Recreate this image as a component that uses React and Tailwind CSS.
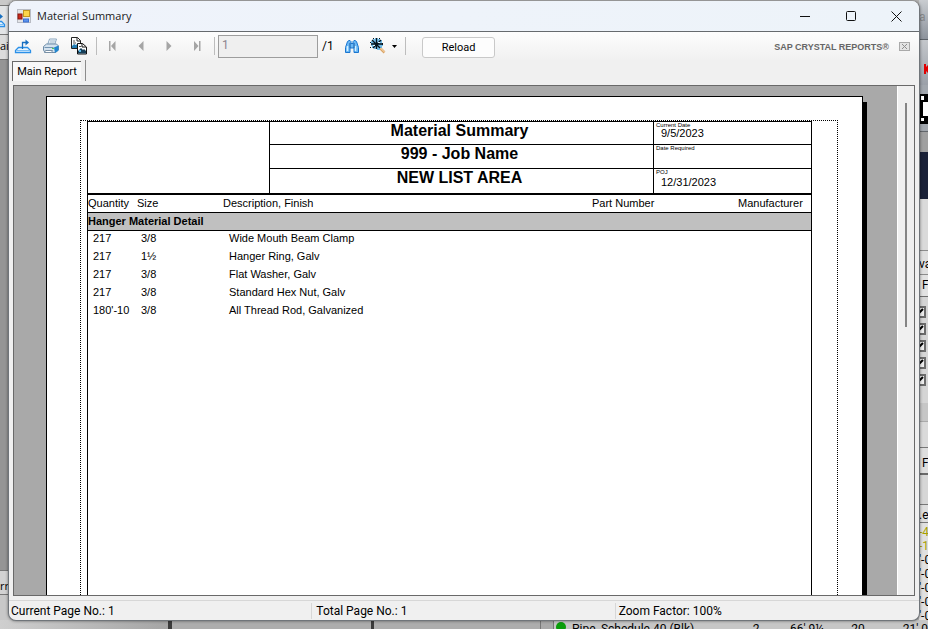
import React from "react";

const ui = "font-['Open_Sans','Noto_Sans',sans-serif]";
const compact = "font-['Roboto','Open_Sans',sans-serif]";

const items = [
  ["217", "3/8", "Wide Mouth Beam Clamp"],
  ["217", "1½", "Hanger Ring, Galv"],
  ["217", "3/8", "Flat Washer, Galv"],
  ["217", "3/8", "Standard Hex Nut, Galv"],
  ["180'-10", "3/8", "All Thread Rod, Galvanized"],
];

function AppIcon() {
  return (
    <svg width="14" height="14" viewBox="0 0 14 14" aria-hidden="true">
      <rect x="0.5" y="0.5" width="13" height="13" fill="#e2e3e6" stroke="#b9bcc4" />
      <rect x="1" y="5" width="4" height="5" fill="#c92a1c" stroke="#8c150c" />
      <rect x="6.500" y="1.500" width="6" height="6" fill="#fcd44a" stroke="#c39620" />
      <rect x="6.500" y="10" width="5" height="3" fill="#5b93ee" stroke="#3a6fd0" />
    </svg>
  );
}

function ExportIcon() {
  return (
    <svg width="18" height="16" viewBox="0 0 18 16" fill="none" className="shrink-0" aria-hidden="true">
      <path d="M4.500 9.500h9l3 3v2H1.500v-2z" fill="#eaf6ff" stroke="#2b90e8" strokeWidth="1.300" />
      <path d="M2 12.500h14" stroke="#79bdf5" />
      <path d="M8.500 11V4.500h4" stroke="#176fc1" strokeWidth="1.300" />
      <path d="M11.500 1.500l3.500 3-3.500 3z" fill="#176fc1" />
    </svg>
  );
}

function PrintIcon() {
  return (
    <svg width="18" height="16" viewBox="0 0 18 16" aria-hidden="true">
      <path d="M5.500 7L7.500 1h7l-2 6z" fill="#f6fbff" stroke="#8aa6bf" />
      <path d="M8 3h5M7.500 5h5" stroke="#9bb4c9" />
      <path d="M1.500 8.500l3-2.500h10l2 2v4l-3 2.500H3L1.500 12z" fill="#d4e2ee" stroke="#6d8ca8" />
      <path d="M12 9.500l4.500-2v5L13 15z" fill="#2387cf" />
      <path d="M2.500 9.500h9" stroke="#7394b2" />
      <path d="M3.500 12.500h7l-1 2H2.500z" fill="#fff" stroke="#7890a6" />
      <rect x="10" y="10" width="2" height="1" fill="#48c95a" />
    </svg>
  );
}

function CopyIcon() {
  return (
    <svg width="18" height="18" viewBox="0 0 18 18" aria-hidden="true">
      <path d="M1.500 .5h6l3 3v8h-9z" fill="#fff" stroke="#222" />
      <path d="M7 .5v3.500h3.500" fill="none" stroke="#222" />
      <path d="M3 4h2M3 6h3" stroke="#555" />
      <path d="M2 11V9l2-2 2 1 2-2 2 3v2z" fill="#267fb5" />
      <path d="M7.500 6.500h5l4 3.500v7h-9z" fill="#fff" stroke="#111" />
      <path d="M12 6.500v3.500h4" fill="none" stroke="#111" />
      <path d="M9 9.500h2" stroke="#555" />
      <path d="M8 16.500V14l3-3 2 2 1-1 2 2v2.500z" fill="#163e58" />
      <path d="M9 13h2v2H9z" fill="#5bbcec" />
    </svg>
  );
}

function NavIcon({ kind }) {
  return (
    <svg width="12" height="10" viewBox="0 0 12 10" fill="#a5a5a5" aria-hidden="true">
      {kind === "first" && <path d="M2 0h1.500v10H2zM8.500 0v10L4 5z" />}
      {kind === "prev" && <path d="M8.500 0v10L3.500 5z" />}
      {kind === "next" && <path d="M3.500 0v10L8.500 5z" />}
      {kind === "last" && <path d="M3 0v10L7.500 5zM8 0h1.500v10H8z" />}
    </svg>
  );
}

function FindIcon() {
  return (
    <svg width="14" height="13" viewBox="0 0 14 13" aria-hidden="true">
      <path d="M2.500 1.500l1.500-1h1l1 1v2h2v-2l1-1h1l1.500 1 2 6v5h-4.500V8h-4v4.500H.5v-5z" fill="#69b8f7" stroke="#1b76cf" />
      <path d="M2.500 6v5M10.500 6v5" stroke="#d4f0ff" strokeWidth="1.500" />
      <path d="M5 3v5M9 3v5" stroke="#1458a2" />
    </svg>
  );
}

function ZoomIcon() {
  return (
    <svg width="16" height="16" viewBox="0 0 16 16" aria-hidden="true">
      <path d="M9.500 9.500l5 5" stroke="#d9a468" strokeWidth="2.500" />
      <path d="M10.500 10l4 4" stroke="#ffe0b4" />
      <path d="M1 3h2V1h2V0h3v1h2v1h2v3h1v3h-1v2h-2v2H7v-1H4v-1H2V8H1z" fill="#72bce7" />
      <path d="M6.500 0v11M1 6h11M2 2l8 8M11 2l-8 8" stroke="#07131c" strokeWidth="1.300" />
      <path d="M3 0h1v1H3zM9 0h1v1H9zM0 4h1v1H0zM12 5h1v2h-1zM0 9h1v1H0z" fill="#07131c" />
      <path d="M8 4h2v1H8zM3 7h2v1H3z" fill="#e2f7ff" />
    </svg>
  );
}

function ToolButton({ label, children }) {
  return (
    <button type="button" aria-label={label} className="flex w-7 shrink-0 items-center justify-center">
      {children}
    </button>
  );
}

function Separator() {
  return <span className="h-[18px] w-px shrink-0 bg-[#bdbdbd]" />;
}

function TitleBar() {
  return (
    <header className="flex h-[31px] shrink-0 items-center border-b border-[#666a6e] bg-linear-to-r from-[#eff3fb] to-[#edf3f9] pl-2">
      <AppIcon />
      <h1 className={`flex-1 pl-[6px] text-[11px] leading-4 text-[#1a1a1a] ${ui}`}>Material Summary</h1>
      <button type="button" aria-label="Minimize" className="flex h-full w-[46px] items-center justify-center">
        <svg width="11" height="11" stroke="#111"><path d="M1 5.500h10" /></svg>
      </button>
      <button type="button" aria-label="Maximize" className="flex h-full w-[46px] items-center justify-center">
        <svg width="11" height="11" fill="none" stroke="#111"><rect x="1.500" y=".5" width="9" height="9" rx="1" /></svg>
      </button>
      <button type="button" aria-label="Close" className="flex h-full w-[46px] items-center justify-center">
        <svg width="11" height="11" stroke="#111"><path d="M.5.5l10 10M10.500.5l-10 10" /></svg>
      </button>
    </header>
  );
}

function Toolbar() {
  return (
    <div className={`flex h-7 shrink-0 items-center bg-linear-to-b from-[#fdfdfd] to-[#f1f1f1] ${compact}`}>
      <ToolButton label="Export report"><ExportIcon /></ToolButton>
      <ToolButton label="Print report"><PrintIcon /></ToolButton>
      <ToolButton label="Copy"><CopyIcon /></ToolButton>
      <span className="w-[3px] shrink-0" />
      <Separator />
      <span className="w-[2px] shrink-0" />
      <ToolButton label="First page"><NavIcon kind="first" /></ToolButton>
      <ToolButton label="Previous page"><NavIcon kind="prev" /></ToolButton>
      <ToolButton label="Next page"><NavIcon kind="next" /></ToolButton>
      <ToolButton label="Last page"><NavIcon kind="last" /></ToolButton>
      <span className="w-[3px] shrink-0" />
      <Separator />
      <input
        type="text"
        aria-label="Page number"
        defaultValue="1"
        disabled
        className="ml-[3px] h-[23px] w-[100px] shrink-0 border border-[#9d9d9d] bg-[#efefef] px-[3px] pb-[2px] text-[12px] text-[#8d8590]"
      />
      <span className="w-5 shrink-0 pl-1 text-[12px] text-black">/1</span>
      <ToolButton label="Find text"><FindIcon /></ToolButton>
      <button type="button" aria-label="Zoom" className="ml-[4px] flex w-8 shrink-0 items-center gap-[6px]">
        <ZoomIcon />
        <svg width="5" height="3"><path d="M0 0h5L2.500 3z" /></svg>
      </button>
      <span className="w-[3px] shrink-0" />
      <Separator />
      <button type="button" className="mt-[3px] ml-4 h-[21px] w-[73px] shrink-0 rounded-[3px] border border-[#c9c9c9] bg-[#fdfdfd] text-[11px] leading-4 text-black">
        Reload
      </button>
      <span className="flex-1" />
      <span className="pt-[3px] font-['Liberation_Sans',Arial,sans-serif] text-[9px] font-bold text-[#666]">SAP CRYSTAL REPORTS®</span>
      <button type="button" aria-label="Close view" className="mr-[9px] ml-[10px]">
        <svg width="11" height="9" viewBox="0 0 11 9" fill="none" stroke="#a9a9a9">
          <rect x=".5" y=".5" width="10" height="8" fill="#e4e4e4" />
          <path d="M3 2l5 5M8 2L3 7" stroke="#8e8e8e" />
        </svg>
      </button>
    </div>
  );
}

function TabStrip() {
  return (
    <div className="flex h-[25px] shrink-0 items-start bg-[#f0f0f0] pl-[3px]" role="tablist">
      <button
        type="button"
        role="tab"
        aria-selected="true"
        className={`mt-px h-[20px] w-[69px] border-t border-l border-[#696969] bg-[#f8f8f8] text-[11px] leading-4 whitespace-nowrap text-black ${compact}`}
      >
        Main Report
      </button>
      <span className="ml-[4px] h-[21px] w-px bg-[#8c8c8c]" />
    </div>
  );
}

function DateCell({ label, value, pad }) {
  return (
    <dl className="pl-[2px]">
      <dt className="text-[6px] leading-[6px]">{label}</dt>
      <dd className={`pl-[5px] text-[11px] leading-[11px] ${pad}`}>{value}</dd>
    </dl>
  );
}

function ReportHeader() {
  return (
    <div className="grid grid-cols-[182px_1fr_158px] border-b-2 border-black">
      <div className="border-r border-black" />
      <div className="grid grid-rows-[23px_24px_24px] divide-y divide-black text-center text-[16px] leading-[17px] font-bold">
        <h2 className="pr-[4px]">Material Summary</h2>
        <p className="pr-[4px]">999 - Job Name</p>
        <p className="pr-[4px]">NEW LIST AREA</p>
      </div>
      <div className="grid grid-rows-[23px_24px_24px] divide-y divide-black border-l border-black">
        <DateCell label="Current Date" value="9/5/2023" pad="" />
        <DateCell label="Date Required" value="" pad="" />
        <DateCell label="POJ" value="12/31/2023" pad="pt-[2px]" />
      </div>
    </div>
  );
}

function ReportTable() {
  return (
    <table className="w-full table-fixed border-separate border-spacing-0 text-left text-[11px]">
      <colgroup>
        <col className="w-[49px]" />
        <col className="w-[86px]" />
        <col />
        <col className="w-[146px]" />
        <col className="w-[73px]" />
      </colgroup>
      <thead>
        <tr className="h-[17px] leading-[17px]">
          <th className="font-normal">Quantity</th>
          <th className="font-normal">Size</th>
          <th className="font-normal">Description, Finish</th>
          <th className="font-normal">Part Number</th>
          <th className="font-normal">Manufacturer</th>
        </tr>
      </thead>
      <tbody>
        <tr>
          <th colSpan={5} className="h-[19px] border-y border-black bg-[#c0c0c0] leading-[17px] font-bold">
            Hanger Material Detail
          </th>
        </tr>
        {items.map(([qty, size, desc]) => (
          <tr key={desc} className="h-[18px] leading-[14px]">
            <td className="pb-[4px] pl-[5px] whitespace-nowrap">{qty}</td>
            <td className="pb-[4px] pl-[4px]">{size}</td>
            <td className="pb-[4px] pl-[6px]">{desc}</td>
            <td />
            <td />
          </tr>
        ))}
      </tbody>
    </table>
  );
}

function Viewer() {
  return (
    <div className="mx-[4px] flex min-h-0 flex-1 overflow-hidden border border-[#696969] bg-[#a9a9a9]">
      <div className="min-w-0 flex-1 overflow-hidden pt-[10px] pr-[34px] pl-8">
        <article className="flex h-full flex-col border border-b-0 border-black bg-white pt-[23px] pr-6 pl-[33px] font-['Liberation_Sans',Arial,sans-serif] text-black shadow-[4px_6px_0_0_#000]">
          <div className="flex flex-1 flex-col border border-b-0 border-dotted border-black pr-[25px] pl-[6px]">
            <div className="flex-1 border border-b-0 border-black">
              <ReportHeader />
              <ReportTable />
            </div>
          </div>
        </article>
      </div>
      <div className="w-[17px] shrink-0 border-l border-white bg-[#f0f0f0] pt-[17px] pl-[7px]">
        <div className="h-[224px] w-[2px] bg-[#858585]" />
      </div>
    </div>
  );
}

function StatusBar() {
  return (
    <footer className={`mt-[4px] grid h-5 shrink-0 grid-cols-3 items-center border-t border-[#d7d7d7] text-[12px] leading-4 text-black ${compact}`}>
      <span className="border-r border-[#d7d7d7] pl-[2px]">Current Page No.: 1</span>
      <span className="border-r border-[#d7d7d7] pl-1">Total Page No.: 1</span>
      <span className="pl-[3px]">Zoom Factor: 100%</span>
    </footer>
  );
}

function LeftEdge() {
  return (
    <div className={`flex w-[12px] flex-col overflow-hidden text-[11px] ${ui}`}>
      <div className="h-[5px] bg-[#c9c9c9]" />
      <div className="flex h-[30px] items-center justify-end border-t border-b border-[#777] bg-[#e2e4e6] pr-[6px]">
        <ExportIcon />
      </div>
      <div className="h-[25px] border-b border-[#777] bg-[#dcdcdc] leading-[22px]">ai</div>
      <div className="flex-1 bg-[#959595]" />
      <div className="h-[25px] border-t border-b border-[#777] bg-[#d2d2d2] leading-[30px]">rr</div>
      <div className="h-[34px] bg-[#c8c8c8]" />
    </div>
  );
}

function RightEdge() {
  return (
    <div className={`flex w-[13px] flex-col overflow-hidden pl-[4px] text-[12px] leading-[14px] text-black ${compact}`}>
      <div className="h-[40px] border-b border-[#5c6269] bg-linear-to-b from-[#c9ccd0] to-[#8d939c] pt-[10px] text-[#85888b]">a</div>
      <div className="flex h-[45px] items-center justify-end bg-linear-to-b from-[#c4c7cb] to-[#9ba0a8] pt-[17px] pb-[4px]">
        <svg width="4" height="10" fill="#e00000"><path d="M0 0h2v3l2-2v8L2 7v3H0z" /></svg>
      </div>
      <div className="h-[47px] border-b border-[#62666b] bg-[#a1a6ad] pt-[9px]">
        <svg width="9" height="30"><path d="M0 0h9v30H0z" /><path d="M2 2h3v4H2zM2 24h3v3H2zM4 8h5v14H4z" fill="#fff" /></svg>
      </div>
      <div className="h-[20px] bg-[#a0a0a0]" />
      <div className="h-[47px] bg-[#1a2138]" />
      <div className="h-[51px] bg-[#dadada]" />
      <div className="h-[25px] border-t border-b border-[#8c8c8c] bg-[#dfdfdf] pt-[6px]">va</div>
      <div className="h-[22px] border-b border-[#6d6d6d] bg-[#e2e2e2] pt-[3px] pl-[3px]">F</div>
      <div className="flex h-[106px] flex-col gap-[5px] bg-[#d5d5d5] pt-[9px]">
        {[0, 1, 2, 3, 4].map((n) => (
          <svg key={n} width="7" height="12" className="shrink-0" fill="none">
            <path d="M0 1h6v10H0" fill="#eee" stroke="#6b6b6b" strokeWidth="2" />
            <path d="M0 7l4-4" stroke="#000" strokeWidth="2" />
          </svg>
        ))}
      </div>
      <div className="h-[19px] border-b border-[#aaa] bg-[#c6c6c6]" />
      <div className="h-[26px] border-b border-[#777] bg-[#dadada]" />
      <div className="h-[27px] border-b-2 border-[#696969] bg-[#dedede] pt-[8px] pl-[3px]">F</div>
      <div className="h-[30px] border-b border-[#777] bg-[#d6d6d6]" />
      <div className="h-[18px] border-b border-[#777] bg-[#dedede] pt-[3px]">.e</div>
      <div className="flex h-[106px] flex-col bg-[#e0e0e0] pt-[2px] whitespace-nowrap">
        <span className="text-[#a8a000]">-4</span>
        <span className="text-[#a8a000]">-1</span>
        <span>'-0</span>
        <span>'-0</span>
        <span>'-0</span>
        <span>'-0</span>
        <span>'-0</span>
      </div>
    </div>
  );
}

function BottomEdge() {
  return (
    <div className={`flex h-[9px] overflow-hidden bg-[#adadad] text-[12px] leading-[14px] text-black ${compact}`}>
      <div className="w-[168px] shrink-0 bg-linear-to-r from-[#cfcfcf] to-[#a5a5a5]" />
      <div className="w-[4px] shrink-0 bg-[#3b3b3b]" />
      <div className="w-[199px] shrink-0" />
      <div className="w-[3px] shrink-0 bg-[#3b3b3b]" />
      <div className="w-[166px] shrink-0" />
      <div className="w-[14px] shrink-0 border-x border-[#777] bg-[#a9a9a9]" />
      <div className="grid flex-1 grid-cols-[18px_162px_44px_58px_44px_1fr] bg-[#c6c6c6] pt-[2px] whitespace-nowrap">
        <span className="ml-[2px] size-[10px] rounded-full bg-[#0a9d0a]" />
        <span>Pipe, Schedule 40 (Blk)</span>
        <span className="text-center">2</span>
        <span className="text-center">66' 9¼</span>
        <span className="text-center">20</span>
        <span className="text-right">21' 0</span>
      </div>
    </div>
  );
}

export default function App() {
  return (
    <div className="relative h-screen w-full overflow-hidden bg-[#b5b5b5]">
      <div className="absolute inset-0 flex justify-between" aria-hidden="true">
        <LeftEdge />
        <RightEdge />
      </div>
      <div className="absolute inset-x-0 bottom-0" aria-hidden="true">
        <BottomEdge />
      </div>
      <div className="relative h-full pt-px pr-[8px] pb-[8px] pl-[8px]">
        <main className="flex h-full flex-col overflow-hidden rounded-lg border border-t-0 border-[#70757a] bg-[#f0f0f0] shadow-[0_0_3px_rgba(0,0,0,0.5)]">
          <TitleBar />
          <Toolbar />
          <TabStrip />
          <Viewer />
          <StatusBar />
        </main>
      </div>
    </div>
  );
}
